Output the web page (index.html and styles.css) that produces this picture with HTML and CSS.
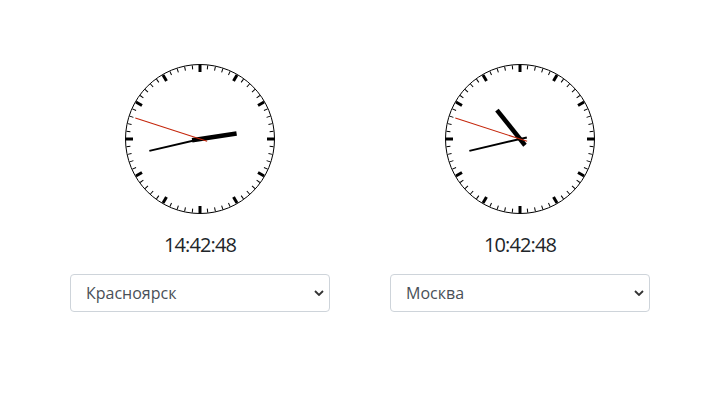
FILE: index.html
```html
<!DOCTYPE html>
<html lang="ru">
<head>
<meta charset="utf-8">
<title>Часы</title>
<link rel="stylesheet" href="styles.css">
</head>
<body>
<svg class="defs" width="0" height="0" aria-hidden="true">
  <defs>
    <line id="tk-min" x1="76" y1="2" x2="76" y2="6" class="tick-minor"/>
    <line id="tk-hr" x1="76" y1="2" x2="76" y2="9" class="tick-major"/>
    <g id="face">
      <circle cx="76" cy="76" r="74.5" class="rim"/>
      <use href="#tk-hr" transform="rotate(0 76 76)"/>
      <use href="#tk-hr" transform="rotate(30 76 76)"/>
      <use href="#tk-hr" transform="rotate(60 76 76)"/>
      <use href="#tk-hr" transform="rotate(90 76 76)"/>
      <use href="#tk-hr" transform="rotate(120 76 76)"/>
      <use href="#tk-hr" transform="rotate(150 76 76)"/>
      <use href="#tk-hr" transform="rotate(180 76 76)"/>
      <use href="#tk-hr" transform="rotate(210 76 76)"/>
      <use href="#tk-hr" transform="rotate(240 76 76)"/>
      <use href="#tk-hr" transform="rotate(270 76 76)"/>
      <use href="#tk-hr" transform="rotate(300 76 76)"/>
      <use href="#tk-hr" transform="rotate(330 76 76)"/>
      <use href="#tk-min" transform="rotate(6 76 76)"/>
      <use href="#tk-min" transform="rotate(12 76 76)"/>
      <use href="#tk-min" transform="rotate(18 76 76)"/>
      <use href="#tk-min" transform="rotate(24 76 76)"/>
      <use href="#tk-min" transform="rotate(36 76 76)"/>
      <use href="#tk-min" transform="rotate(42 76 76)"/>
      <use href="#tk-min" transform="rotate(48 76 76)"/>
      <use href="#tk-min" transform="rotate(54 76 76)"/>
      <use href="#tk-min" transform="rotate(66 76 76)"/>
      <use href="#tk-min" transform="rotate(72 76 76)"/>
      <use href="#tk-min" transform="rotate(78 76 76)"/>
      <use href="#tk-min" transform="rotate(84 76 76)"/>
      <use href="#tk-min" transform="rotate(96 76 76)"/>
      <use href="#tk-min" transform="rotate(102 76 76)"/>
      <use href="#tk-min" transform="rotate(108 76 76)"/>
      <use href="#tk-min" transform="rotate(114 76 76)"/>
      <use href="#tk-min" transform="rotate(126 76 76)"/>
      <use href="#tk-min" transform="rotate(132 76 76)"/>
      <use href="#tk-min" transform="rotate(138 76 76)"/>
      <use href="#tk-min" transform="rotate(144 76 76)"/>
      <use href="#tk-min" transform="rotate(156 76 76)"/>
      <use href="#tk-min" transform="rotate(162 76 76)"/>
      <use href="#tk-min" transform="rotate(168 76 76)"/>
      <use href="#tk-min" transform="rotate(174 76 76)"/>
      <use href="#tk-min" transform="rotate(186 76 76)"/>
      <use href="#tk-min" transform="rotate(192 76 76)"/>
      <use href="#tk-min" transform="rotate(198 76 76)"/>
      <use href="#tk-min" transform="rotate(204 76 76)"/>
      <use href="#tk-min" transform="rotate(216 76 76)"/>
      <use href="#tk-min" transform="rotate(222 76 76)"/>
      <use href="#tk-min" transform="rotate(228 76 76)"/>
      <use href="#tk-min" transform="rotate(234 76 76)"/>
      <use href="#tk-min" transform="rotate(246 76 76)"/>
      <use href="#tk-min" transform="rotate(252 76 76)"/>
      <use href="#tk-min" transform="rotate(258 76 76)"/>
      <use href="#tk-min" transform="rotate(264 76 76)"/>
      <use href="#tk-min" transform="rotate(276 76 76)"/>
      <use href="#tk-min" transform="rotate(282 76 76)"/>
      <use href="#tk-min" transform="rotate(288 76 76)"/>
      <use href="#tk-min" transform="rotate(294 76 76)"/>
      <use href="#tk-min" transform="rotate(306 76 76)"/>
      <use href="#tk-min" transform="rotate(312 76 76)"/>
      <use href="#tk-min" transform="rotate(318 76 76)"/>
      <use href="#tk-min" transform="rotate(324 76 76)"/>
      <use href="#tk-min" transform="rotate(336 76 76)"/>
      <use href="#tk-min" transform="rotate(342 76 76)"/>
      <use href="#tk-min" transform="rotate(348 76 76)"/>
      <use href="#tk-min" transform="rotate(354 76 76)"/>
    </g>
  </defs>
</svg>
<main class="clocks">
  <section class="clock-col">
    <svg class="dial" width="152" height="152" viewBox="0 0 152 152">
      <use href="#face"/>
      <line class="hand-hour" x1="76" y1="84" x2="76" y2="39" transform="rotate(81.4 76 76)"/>
      <line class="hand-min" x1="76" y1="83" x2="76" y2="24" transform="rotate(256.8 76 76)"/>
      <line class="hand-sec" x1="76" y1="83.5" x2="76" y2="8" transform="rotate(288 76 76)"/>
    </svg>
    <div class="time">14:42:48</div>
    <select class="city">
      <option selected>Красноярск</option>
      <option>Москва</option>
    </select>
  </section>
  <section class="clock-col">
    <svg class="dial" width="152" height="152" viewBox="0 0 152 152">
      <use href="#face"/>
      <line class="hand-hour" x1="76" y1="84" x2="76" y2="39" transform="rotate(321.4 76 76)"/>
      <line class="hand-min" x1="76" y1="83" x2="76" y2="24" transform="rotate(256.8 76 76)"/>
      <line class="hand-sec" x1="76" y1="83.5" x2="76" y2="8" transform="rotate(288 76 76)"/>
    </svg>
    <div class="time">10:42:48</div>
    <select class="city">
      <option>Красноярск</option>
      <option selected>Москва</option>
    </select>
  </section>
</main>
</body>
</html>
```

FILE: styles.css
```css
html, body {
  margin: 0;
  background: #fff;
}
body {
  font-family: "Open Sans", "Noto Sans", sans-serif;
  color: #212529;
}
.defs {
  position: absolute;
  width: 0;
  height: 0;
  overflow: hidden;
}
.rim {
  fill: #fff;
  stroke: #000;
  stroke-width: 1;
}
.tick-minor {
  stroke: #000;
  stroke-width: 1;
}
.tick-major {
  stroke: #000;
  stroke-width: 3;
}
.hand-hour {
  stroke: #000;
  stroke-width: 4.5;
}
.hand-min {
  stroke: #000;
  stroke-width: 2;
}
.hand-sec {
  stroke: #c4250a;
  stroke-width: 1;
}
.clocks {
  display: flex;
  padding: 63px 0 0 40px;
}
.clock-col {
  width: 320px;
  display: flex;
  flex-direction: column;
  align-items: center;
}
.dial {
  display: block;
}
.time {
  margin-top: 18px;
  font-size: 20px;
  line-height: 24px;
  letter-spacing: -0.9px;
  color: #212529;
}
.city {
  -webkit-appearance: none;
  appearance: none;
  margin-top: 17px;
  width: 260px;
  height: 38px;
  box-sizing: border-box;
  padding: 0 28px 0 15px;
  border: 1px solid #ced4da;
  border-radius: 4px;
  background-color: #fff;
  background-image: url("data:image/svg+xml,%3Csvg xmlns='http://www.w3.org/2000/svg' width='10' height='6' viewBox='0 0 10 6'%3E%3Cpath d='M1 1l4 4 4-4' fill='none' stroke='%23333' stroke-width='1.8'/%3E%3C/svg%3E");
  background-repeat: no-repeat;
  background-position: right 5px center;
  background-size: 10px 6px;
  font-family: "Open Sans", "Noto Sans", sans-serif;
  font-size: 16px;
  color: #495057;
  outline: none;
}
```
